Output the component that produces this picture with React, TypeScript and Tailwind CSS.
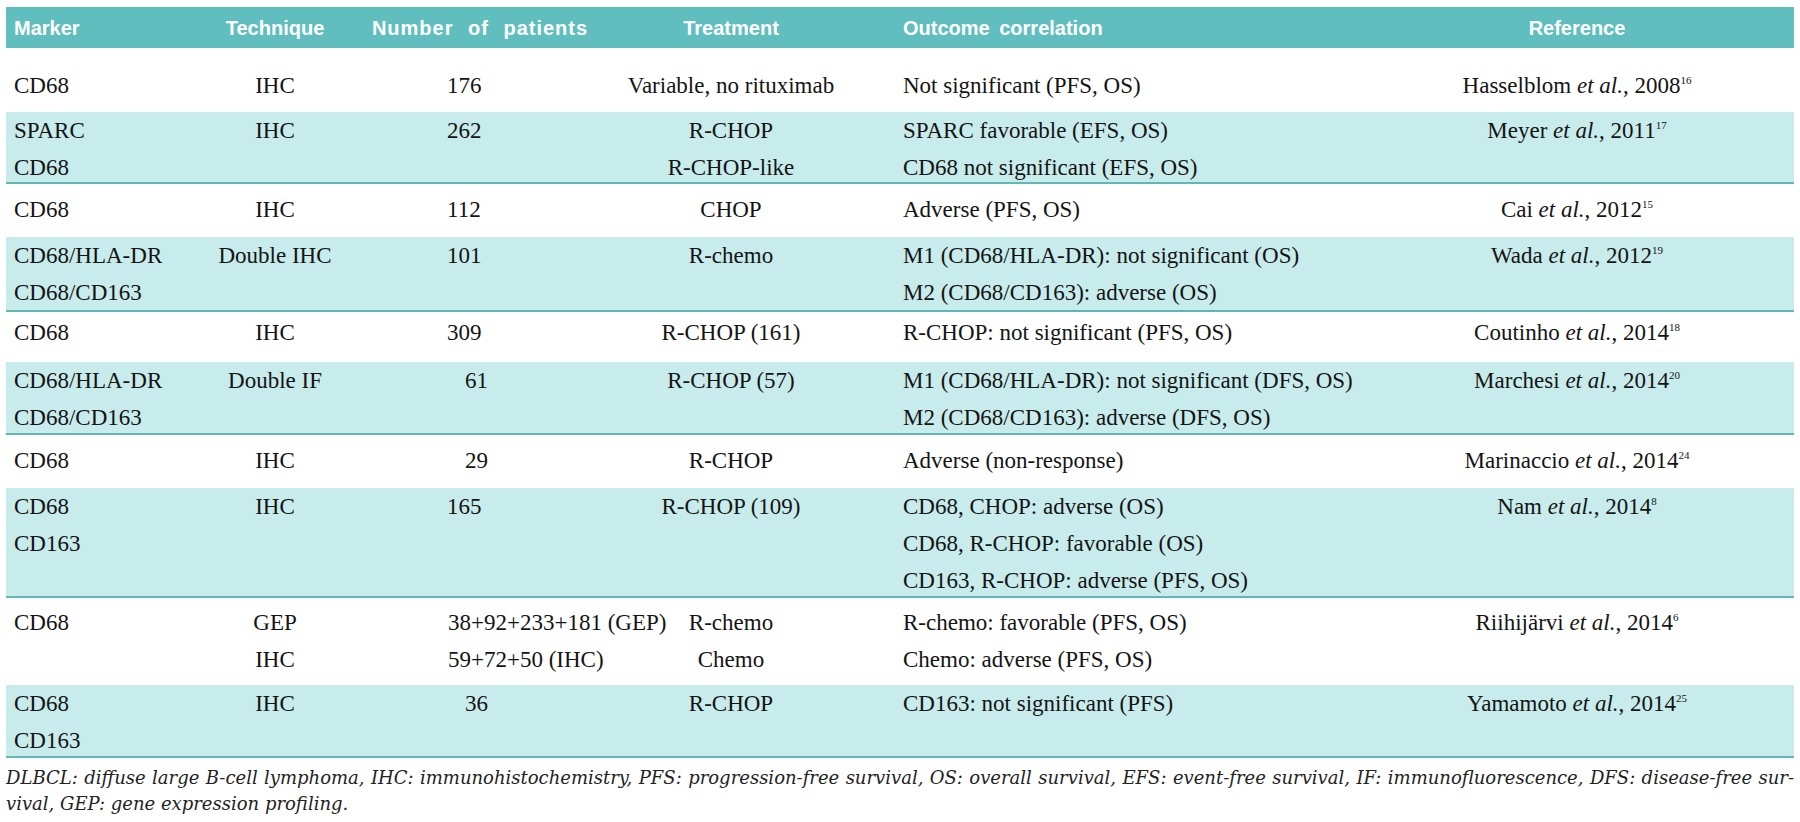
type Ref = { name: string; year: string; sup: string };

type Row = {
  marker: string[];
  tech: string[];
  num: string[];
  numCls: string;
  treat: string[];
  out: string[];
  ref: Ref;
  teal: boolean;
  h: string;
  pt: string;
};

const rows: Row[] = [
  {
    marker: ["CD68"], tech: ["IHC"], num: ["176"], numCls: "pl-[87px]",
    treat: ["Variable, no rituximab"], out: ["Not significant (PFS, OS)"],
    ref: { name: "Hasselblom", year: "2008", sup: "16" }, teal: false, h: "h-[64px]", pt: "pt-[19px]",
  },
  {
    marker: ["SPARC", "CD68"], tech: ["IHC"], num: ["262"], numCls: "pl-[87px]",
    treat: ["R-CHOP", "R-CHOP-like"], out: ["SPARC favorable (EFS, OS)", "CD68 not significant (EFS, OS)"],
    ref: { name: "Meyer", year: "2011", sup: "17" }, teal: true, h: "h-[72px]", pt: "pt-0",
  },
  {
    marker: ["CD68"], tech: ["IHC"], num: ["112"], numCls: "pl-[87px]",
    treat: ["CHOP"], out: ["Adverse (PFS, OS)"],
    ref: { name: "Cai", year: "2012", sup: "15" }, teal: false, h: "h-[53px]", pt: "pt-[7px]",
  },
  {
    marker: ["CD68/HLA-DR", "CD68/CD163"], tech: ["Double IHC"], num: ["101"], numCls: "pl-[87px]",
    treat: ["R-chemo"], out: ["M1 (CD68/HLA-DR): not significant (OS)", "M2 (CD68/CD163): adverse (OS)"],
    ref: { name: "Wada", year: "2012", sup: "19" }, teal: true, h: "h-[75px]", pt: "pt-0",
  },
  {
    marker: ["CD68"], tech: ["IHC"], num: ["309"], numCls: "pl-[87px]",
    treat: ["R-CHOP (161)"], out: ["R-CHOP: not significant (PFS, OS)"],
    ref: { name: "Coutinho", year: "2014", sup: "18" }, teal: false, h: "h-[50px]", pt: "pt-[2px]",
  },
  {
    marker: ["CD68/HLA-DR", "CD68/CD163"], tech: ["Double IF"], num: ["61"], numCls: "pl-[105px]",
    treat: ["R-CHOP (57)"], out: ["M1 (CD68/HLA-DR): not significant (DFS, OS)", "M2 (CD68/CD163): adverse (DFS, OS)"],
    ref: { name: "Marchesi", year: "2014", sup: "20" }, teal: true, h: "h-[73px]", pt: "pt-0",
  },
  {
    marker: ["CD68"], tech: ["IHC"], num: ["29"], numCls: "pl-[105px]",
    treat: ["R-CHOP"], out: ["Adverse (non-response)"],
    ref: { name: "Marinaccio", year: "2014", sup: "24" }, teal: false, h: "h-[53px]", pt: "pt-[7px]",
  },
  {
    marker: ["CD68", "CD163"], tech: ["IHC"], num: ["165"], numCls: "pl-[87px]",
    treat: ["R-CHOP (109)"], out: ["CD68, CHOP: adverse (OS)", "CD68, R-CHOP: favorable (OS)", "CD163, R-CHOP: adverse (PFS, OS)"],
    ref: { name: "Nam", year: "2014", sup: "8" }, teal: true, h: "h-[110px]", pt: "pt-0",
  },
  {
    marker: ["CD68"], tech: ["GEP", "IHC"], num: ["38+92+233+181 (GEP)", "59+72+50 (IHC)"], numCls: "pl-[88px] text-center",
    treat: ["R-chemo", "Chemo"], out: ["R-chemo: favorable (PFS, OS)", "Chemo: adverse (PFS, OS)"],
    ref: { name: "Riihijärvi", year: "2014", sup: "6" }, teal: false, h: "h-[87px]", pt: "pt-[6px]",
  },
  {
    marker: ["CD68", "CD163"], tech: ["IHC"], num: ["36"], numCls: "pl-[105px]",
    treat: ["R-CHOP"], out: ["CD163: not significant (PFS)"],
    ref: { name: "Yamamoto", year: "2014", sup: "25" }, teal: true, h: "h-[73px]", pt: "pt-0",
  },
];

function Lines({ items }: { items: string[] }) {
  return (
    <>
      {items.map((t, i) => (
        <div key={i} className="whitespace-nowrap">{t}</div>
      ))}
    </>
  );
}

export default function App() {
  return (
    <div className="w-[1800px] h-[822px] bg-white pt-[7px] px-[6px] text-[#141414]">
      {/* header */}
      <div className="flex h-[41px] items-center whitespace-nowrap bg-[#60bebe] text-white text-[20px] font-bold font-[Liberation_Sans,Arial,sans-serif]">
        <div className="w-[184px] pl-2">Marker</div>
        <div className="w-[170px] text-center">Technique</div>
        <div className="w-[240px] text-center tracking-[1px] [word-spacing:8px]">Number of patients</div>
        <div className="w-[262px] text-center">Treatment</div>
        <div className="w-[498px] pl-[41px] [word-spacing:4px]">Outcome correlation</div>
        <div className="w-[434px] text-center">Reference</div>
      </div>

      {/* body */}
      <div className="font-[Liberation_Serif] text-[23px] leading-[37px]">
        {rows.map((r, i) => (
          <div
            key={i}
            className={`flex items-start ${r.h} ${r.pt} ${r.teal ? "bg-[#c8ebeb] border-b-2 border-[#5fb8b4]" : "bg-white"}`}
          >
            <div className="w-[184px] pl-2"><Lines items={r.marker} /></div>
            <div className="w-[170px] text-center"><Lines items={r.tech} /></div>
            <div className={`w-[240px] ${r.numCls}`}><Lines items={r.num} /></div>
            <div className="w-[262px] text-center"><Lines items={r.treat} /></div>
            <div className="w-[498px] pl-[41px]"><Lines items={r.out} /></div>
            <div className="w-[434px] text-center whitespace-nowrap">
              {r.ref.name} <i>et al.</i>, {r.ref.year}
              <sup className="text-[11px] relative -top-[9px]">{r.ref.sup}</sup>
            </div>
          </div>
        ))}
      </div>

      {/* footnote */}
      <div className="pt-[7px] font-[DejaVu_Serif] italic text-[18px] leading-[26px] text-[#222]">
        <div className="text-justify [text-align-last:justify] whitespace-nowrap overflow-hidden">
          DLBCL: diffuse large B-cell lymphoma, IHC: immunohistochemistry, PFS: progression-free survival, OS: overall survival, EFS: event-free survival, IF: immunofluorescence, DFS: disease-free sur-
        </div>
        <div>vival, GEP: gene expression profiling.</div>
      </div>
    </div>
  );
}
